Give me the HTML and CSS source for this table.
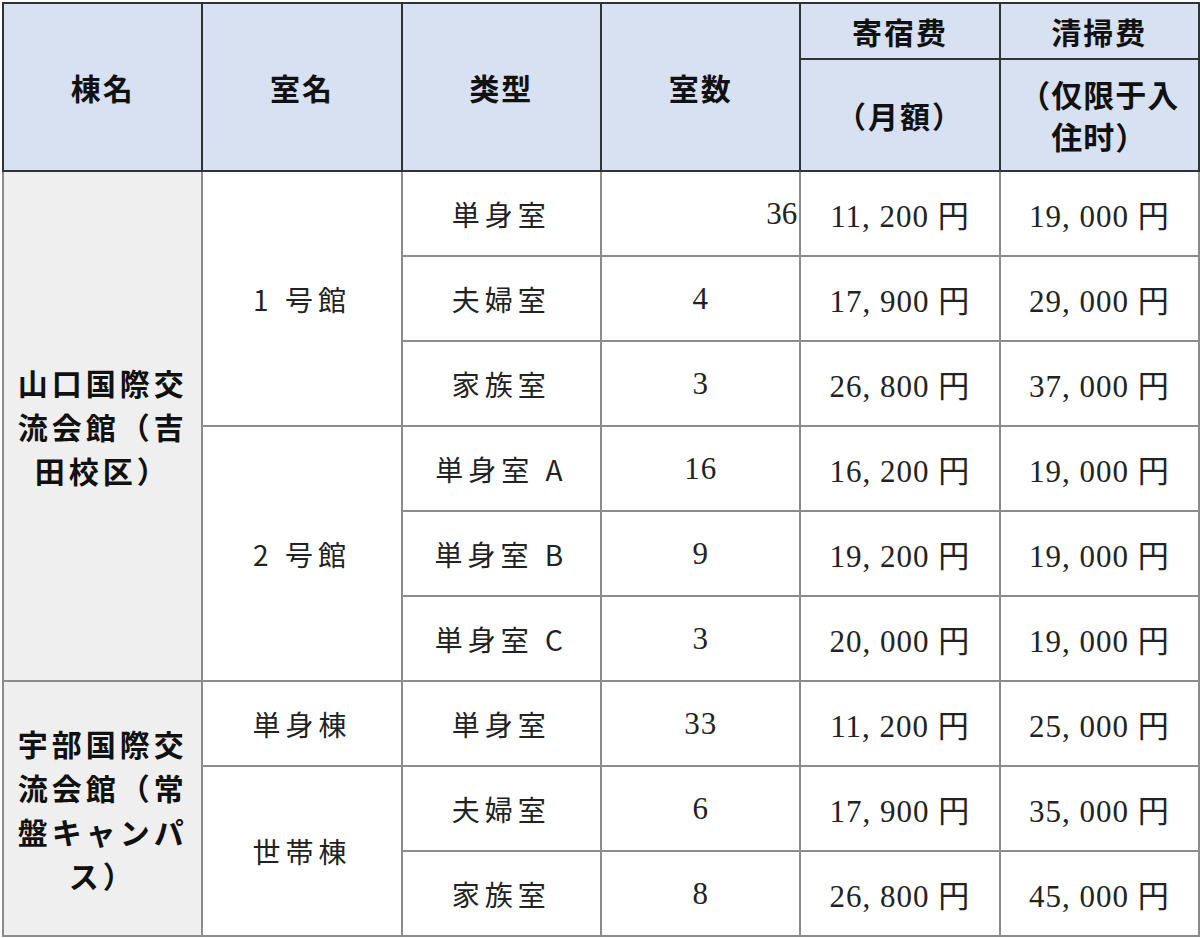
FILE: index.html
```html
<!DOCTYPE html>
<html lang="ja">
<head>
<meta charset="utf-8">
<link rel="stylesheet" href="styles.css">
</head>
<body>
<table class="fees">
  <colgroup>
    <col class="c"><col class="c"><col class="c"><col class="c"><col class="c"><col class="c">
  </colgroup>
  <thead>
    <tr class="h1">
      <th rowspan="2">棟名</th>
      <th rowspan="2">室名</th>
      <th rowspan="2">类型</th>
      <th rowspan="2">室数</th>
      <th>寄宿费</th>
      <th>清掃费</th>
    </tr>
    <tr class="h2">
      <th>（月額）</th>
      <th class="wrap">（仅限于入住时）</th>
    </tr>
  </thead>
  <tbody>
    <tr>
      <td rowspan="6" class="bld">山口国際交流会館（吉田校区）</td>
      <td rowspan="3">1 号館</td>
      <td>単身室</td>
      <td class="num right">36</td>
      <td class="num">11, 200 円</td>
      <td class="num">19, 000 円</td>
    </tr>
    <tr>
      <td>夫婦室</td>
      <td class="num">4</td>
      <td class="num">17, 900 円</td>
      <td class="num">29, 000 円</td>
    </tr>
    <tr>
      <td>家族室</td>
      <td class="num">3</td>
      <td class="num">26, 800 円</td>
      <td class="num">37, 000 円</td>
    </tr>
    <tr>
      <td rowspan="3">2 号館</td>
      <td>単身室 A</td>
      <td class="num">16</td>
      <td class="num">16, 200 円</td>
      <td class="num">19, 000 円</td>
    </tr>
    <tr>
      <td>単身室 B</td>
      <td class="num">9</td>
      <td class="num">19, 200 円</td>
      <td class="num">19, 000 円</td>
    </tr>
    <tr>
      <td>単身室 C</td>
      <td class="num">3</td>
      <td class="num">20, 000 円</td>
      <td class="num">19, 000 円</td>
    </tr>
    <tr>
      <td rowspan="3" class="bld">宇部国際交流会館（常盤キャンパス）</td>
      <td>単身棟</td>
      <td>単身室</td>
      <td class="num">33</td>
      <td class="num">11, 200 円</td>
      <td class="num">25, 000 円</td>
    </tr>
    <tr>
      <td rowspan="2">世帯棟</td>
      <td>夫婦室</td>
      <td class="num">6</td>
      <td class="num">17, 900 円</td>
      <td class="num">35, 000 円</td>
    </tr>
    <tr>
      <td>家族室</td>
      <td class="num">8</td>
      <td class="num">26, 800 円</td>
      <td class="num">45, 000 円</td>
    </tr>
  </tbody>
</table>
</body>
</html>
```
FILE: styles.css
```css
html, body {
  margin: 0;
  padding: 0;
  background: #ffffff;
}
body {
  width: 1200px;
  height: 938px;
  overflow: hidden;
}
.fees {
  border-collapse: collapse;
  table-layout: fixed;
  width: 1198px;
  margin: 2px 0 0 2px;
  font-family: "Liberation Serif", "Noto Sans CJK JP", serif;
  color: #1a1a1a;
}
.fees col.c {
  width: 199px;
}
.fees th {
  background: #d8e1f1;
  border: 2px solid #2e3436;
  font-family: "Noto Sans CJK JP", sans-serif;
  font-weight: 700;
  font-size: 30px;
  letter-spacing: 2px;
  color: #111;
  padding: 0 10px;
  line-height: 42px;
}
.fees tr.h1 th {
  height: 54px;
}
.fees tr.h2 th {
  height: 110px;
}
.fees th.wrap {
  padding: 0 4px;
  font-size: 31px;
  letter-spacing: 1px;
}
.fees td {
  border: 2px solid #8c8c8c;
  height: 83px;
  padding: 0;
  text-align: center;
  font-family: "Noto Sans CJK JP", sans-serif;
  font-weight: 400;
  font-size: 28px;
  letter-spacing: 5px;
  color: #222;
}
.fees td.bld {
  background: #efeff0;
  font-weight: 700;
  font-size: 30px;
  letter-spacing: 4px;
  line-height: 44px;
  padding: 0 8px;
  color: #111;
}
.fees td.num {
  font-family: "Liberation Serif", "Noto Sans CJK JP", serif;
  font-size: 31px;
  letter-spacing: 1px;
}
.fees td.right {
  text-align: right;
  letter-spacing: 0;
  padding-right: 2px;
}
```
